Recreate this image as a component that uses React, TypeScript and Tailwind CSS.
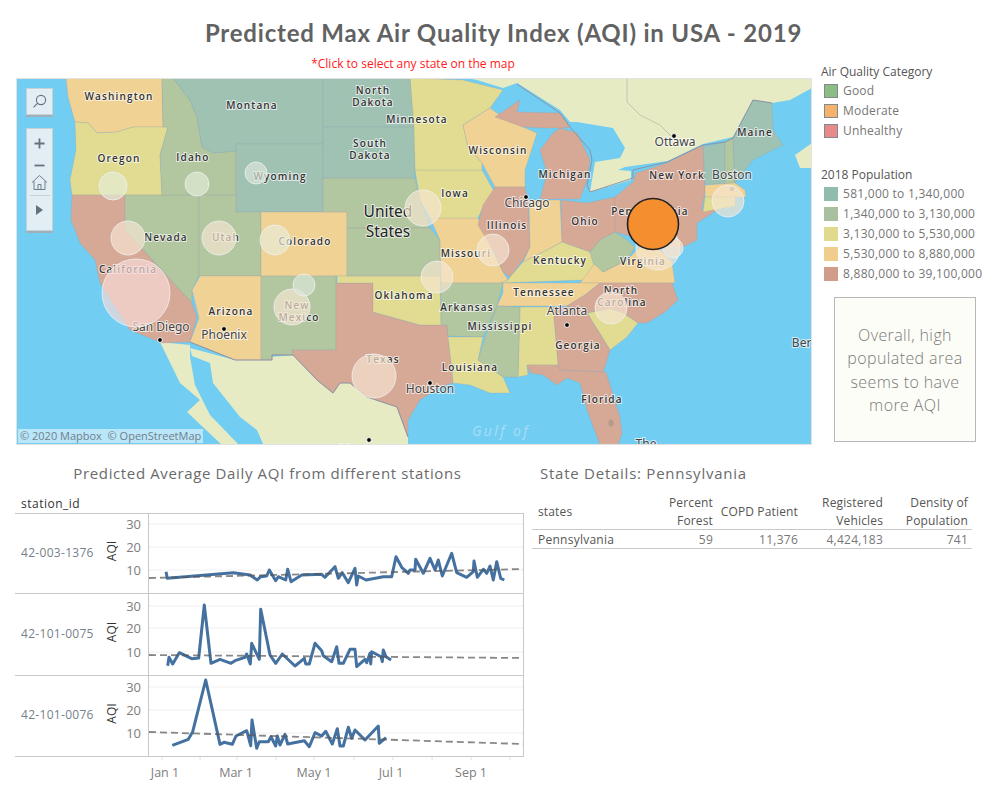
const LAND = '#e6ebc4';
const TEAL = '#9fc2b3';
const GREEN = '#b2c6a0';
const YELLOW = '#e1dc92';
const ORANGE = '#f0d294';
const RED = '#d6a996';

// state shapes, in page coordinates
const states: [string, string][] = [
  [ORANGE, '66,78 162,78 163,127 133,127 117,132 97,133 88,123 75,122 68,97'],
  [YELLOW, '75,122 88,123 97,133 117,132 133,127 168,127 160,155 162,195 72,195 70,180 76,150'],
  [RED, '72,195 125,195 125,230 192,303 197,317 190,342 162,343 130,330 100,283 95,260 80,243 71,220'],
  [GREEN, '125,195 199,195 199,275 192,290 192,303 125,230'],
  [GREEN, '162,78 173,78 190,100 197,117 202,147 213,153 236,151 236,195 162,195 160,155 168,127 163,127'],
  [TEAL, '173,78 323,78 323,144 236,144 236,151 213,153 202,147 197,117 190,100'],
  [TEAL, '236,144 323,144 323,212 236,212'],
  [GREEN, '199,195 236,195 236,212 261,212 261,276 199,276'],
  [ORANGE, '261,212 347,212 347,276 261,276'],
  [ORANGE, '200,276 261,276 261,360 235,360 190,342 199,318 192,290'],
  [GREEN, '261,276 336,276 336,350 292,350 293,355 272,355 272,360 261,360'],
  [RED, '336,283 373,283 373,312 420,325 441,325 447,325 448,336 452,370 453,383 440,387 420,400 408,420 408,437 397,407 367,397 350,383 340,383 333,393 317,380 293,355 292,350 336,350'],
  [YELLOW, '337,276 440,276 441,325 420,325 373,312 373,283 337,283'],
  [GREEN, '323,178 415,178 420,200 430,228 347,228 347,212 323,212'],
  [GREEN, '347,228 430,228 440,240 440,276 347,276'],
  [ORANGE, '430,218 478,218 490,245 503,272 508,280 501,283 441,283 440,240'],
  [YELLOW, '415,170 482,170 495,193 483,207 478,218 430,218 420,200'],
  [YELLOW, '410,78 463,80 503,90 490,108 463,125 468,147 482,163 482,170 415,170'],
  [TEAL, '323,78 410,78 414,127 323,127'],
  [TEAL, '323,127 414,127 415,178 323,178'],
  [ORANGE, '463,125 490,108 500,115 523,127 537,133 525,170 525,187 495,187 482,163 468,147'],
  [RED, '495,117 520,100 517,112 560,113 570,127 563,128 543,128 523,127'],
  [RED, '560,128 577,133 590,160 587,180 580,199 540,199 547,173 540,150 553,133'],
  [RED, '495,187 525,187 528,200 530,247 523,260 510,277 503,272 495,253 478,225 483,205'],
  [ORANGE, '529,200 560,200 562,242 547,250 523,262 530,247'],
  [RED, '561,200 587,203 615,197 615,232 600,240 590,252 562,242'],
  [YELLOW, '523,262 547,250 562,242 590,252 595,263 583,280 500,283 508,280 510,277'],
  [ORANGE, '580,283 595,263 603,272 627,260 640,247 660,250 672,262 675,283'],
  [GREEN, '615,232 627,240 635,247 627,260 603,272 593,263 590,252 600,240'],
  [RED, '615,197 633,182 636,173 667,163 703,145 705,190 702,210 725,205 697,223 697,240 683,247 670,245 640,240 633,237 615,232'],
  [TEAL, '703,147 725,142 725,184 705,184'],
  [GREEN, '725,142 733,138 735,184 725,184'],
  [TEAL, '733,138 753,100 772,103 773,130 783,145 753,160 735,183'],
  [ORANGE, '705,185 735,183 745,190 746,197 705,197'],
  [YELLOW, '705,197 735,197 735,206 703,212'],
  [ORANGE, '503,283 600,283 585,295 567,306 497,306 503,293'],
  [RED, '600,283 672,283 678,300 665,312 647,323 638,323 623,313 610,309 587,313 567,306 585,295'],
  [YELLOW, '587,313 610,309 623,313 638,323 627,337 610,350 602,337'],
  [RED, '553,307 587,307 587,313 602,337 610,350 605,367 603,372 560,370 558,365'],
  [YELLOW, '520,307 553,307 558,365 527,365 528,375 518,377'],
  [RED, '527,365 558,365 560,370 603,372 606,372 620,417 622,433 618,445 600,445 587,410 580,383 567,378 557,385 543,375 530,373'],
  [GREEN, '497,306 520,307 518,377 503,377 478,360 485,337'],
  [GREEN, '441,283 503,283 497,306 483,337 448,336 447,325 441,325'],
  [YELLOW, '448,337 483,337 478,360 503,377 510,393 490,393 470,385 453,383 452,370'],
];

const stateLabels: [string, number, number][] = [
  ['Washington', 119, 96], ['Montana', 252, 105], ['North', 373, 90], ['Dakota', 373, 102],
  ['South', 370, 143], ['Dakota', 370, 155], ['Minnesota', 417, 119], ['Wisconsin', 498, 150],
  ['Michigan', 565, 174], ['New York', 677, 175], ['Maine', 755, 132], ['Oregon', 119, 158],
  ['Idaho', 193, 157], ['Wyoming', 280, 176], ['Iowa', 455, 193], ['Illinois', 507, 225],
  ['Ohio', 585, 221], ['Pennsylvania', 650, 211], ['Nevada', 166, 237], ['Utah', 226, 237],
  ['Colorado', 305, 241], ['Missouri', 466, 253], ['Kentucky', 560, 260], ['Virginia', 643, 261],
  ['California', 128, 269], ['Arizona', 231, 311], ['New', 297, 305], ['Mexico', 299, 317],
  ['Oklahoma', 404, 295], ['Arkansas', 467, 307], ['Tennessee', 544, 292], ['North', 621, 290],
  ['Carolina', 622, 302], ['Mississippi', 500, 326], ['Georgia', 578, 345], ['Louisiana', 470, 367],
  ['Florida', 602, 399], ['Texas', 383, 359],
];

const cityLabels: [string, number, number][] = [
  ['Ottawa', 675, 142], ['Boston', 732, 175], ['Chicago', 527, 203], ['San Diego', 161, 327],
  ['Phoenix', 224, 335], ['Atlanta', 567, 311], ['Houston', 430, 389], ['Monterrey', 369, 449],
  ['Bermuda', 818, 343], ['The', 646, 444],
];

const cityDots: [number, number][] = [
  [674, 136], [526, 197], [160, 340], [224, 329], [567, 325], [430, 383], [369, 440],
];

const bubbles: [number, number, number, string][] = [
  [113, 186, 14, '#e4ecd8'], [197, 184, 12, '#e4ecd8'], [256, 173, 11, '#dce8da'],
  [128, 238, 17, '#f6e6d2'], [219, 238, 17, '#f6e6d2'], [275, 240, 15, '#e9ecd8'],
  [423, 208, 18, '#f6e6d2'], [136, 293, 34, '#f7dcd8'], [292, 307, 18, '#f6e6d2'],
  [304, 285, 11, '#dce8da'], [374, 376, 22, '#f6e6d2'], [493, 250, 16, '#f6e6d2'],
  [437, 277, 16, '#f6e6d2'], [611, 308, 16, '#f6e6d2'], [728, 201, 16, '#f6e6d2'],
  [658, 248, 22, '#f6e6d2'], [673, 248, 10, '#f6e6d2'],
];

const fromLeftCrop = (p: number[][]) => p.map(([x, y]) => [x / 3, 460 + y / 3]);
const fromRightCrop = (p: number[][]) => p.map(([x, y]) => [260 + x / 3, 490 + y / 3]);
const toPoints = (p: number[][]) => p.map(([x, y]) => `${x.toFixed(1)},${y.toFixed(1)}`).join(' ');

const rows = [
  {
    id: '42-003-1376',
    top: 514,
    h: 79,
    grid: [524, 547, 570],
    trend: [578, 569],
    line: [
      ...fromLeftCrop([[498, 335], [502, 355], [700, 338], [750, 345], [772, 360], [782, 350]]),
      ...fromRightCrop([[20, 258], [28, 240], [47, 272], [55, 260], [77, 270], [83, 238], [93, 275], [125, 255], [185, 253], [195, 262], [225, 230], [235, 265], [247, 248], [265, 278], [285, 235], [290, 285], [295, 258], [318, 270], [370, 260], [395, 260], [408, 200], [425, 232], [445, 250], [450, 240], [465, 240], [467, 208], [490, 250], [510, 205], [525, 240], [535, 210], [547, 258], [575, 190], [590, 248], [620, 262], [640, 245], [642, 213], [652, 262], [670, 238], [680, 250], [690, 228], [700, 270], [710, 215], [722, 265], [733, 270]]),
    ],
  },
  {
    id: '42-101-0075',
    top: 594,
    h: 81,
    grid: [606, 628, 652],
    trend: [655, 658],
    line: [
      ...fromLeftCrop([[503, 617], [507, 592], [518, 612], [538, 578], [575, 596], [596, 594], [613, 435], [633, 610], [660, 598], [693, 610], [705, 602], [735, 592], [740, 582], [751, 612], [755, 550], [778, 598], [782, 448]]),
      ...fromRightCrop([[30, 495], [47, 520], [67, 492], [105, 528], [133, 505], [137, 522], [148, 522], [165, 460], [185, 482], [190, 497], [215, 515], [230, 470], [237, 520], [250, 520], [270, 478], [285, 478], [290, 530], [315, 508], [320, 518], [330, 490], [332, 522], [335, 485], [363, 500], [367, 515], [370, 480], [378, 500], [393, 510]]),
    ],
  },
  {
    id: '42-101-0076',
    top: 676,
    h: 80,
    grid: [687, 710, 733],
    trend: [732, 744],
    line: [
      ...fromLeftCrop([[517, 856], [565, 838], [578, 815], [617, 660], [660, 853], [672, 847], [697, 853], [708, 828], [740, 812], [752, 857], [756, 780], [770, 865], [778, 845]]),
      ...fromRightCrop([[25, 755], [33, 740], [47, 768], [52, 738], [60, 765], [75, 733], [83, 762], [133, 752], [148, 770], [165, 728], [185, 738], [197, 724], [217, 762], [232, 716], [240, 768], [250, 768], [265, 712], [275, 745], [285, 720], [315, 750], [355, 708], [358, 760], [378, 743]]),
    ],
  },
];

const ticksX = [162, 200, 237, 276, 314, 354, 393, 432, 471, 510];
const monthLabels: [string, number][] = [['Jan 1', 165], ['Mar 1', 236], ['May 1', 314], ['Jul 1', 391], ['Sep 1', 471]];

const aqiLegend: [string, string][] = [['Good', '#8cbd85'], ['Moderate', '#f6b26b'], ['Unhealthy', '#e88a8a']];
const popLegend: [string, string][] = [
  ['581,000 to 1,340,000', '#90bcae'],
  ['1,340,000 to 3,130,000', '#a8c09f'],
  ['3,130,000 to 5,530,000', '#e0da8e'],
  ['5,530,000 to 8,880,000', '#f1cd8d'],
  ['8,880,000 to 39,100,000', '#d29c8b'],
];

function MapTools() {
  return (
    <>
      <div className="absolute left-[9px] top-[9px] flex h-[27px] w-[27px] items-center justify-center border border-[#c6d0d6] bg-[#e3eef4] shadow-[0_2px_0_#9fb0ba]">
        <svg width="15" height="15" viewBox="0 0 15 15" fill="none" stroke="#66727a" strokeWidth="1.1">
          <circle cx="9" cy="6" r="4.6" />
          <path d="M5.6 9.2 1.5 13.4" />
        </svg>
      </div>
      <div className="absolute left-[9px] top-[49px] flex h-[103px] w-[27px] flex-col items-center border border-[#c6d0d6] bg-[#e3eef4] shadow-[0_2px_0_#9fb0ba]">
        <svg className="mt-[8px]" width="13" height="13" viewBox="0 0 13 13" fill="none" stroke="#66727a" strokeWidth="1.8">
          <path d="M6.5 1.5v10M1.5 6.5h10" />
        </svg>
        <svg className="mt-[9px]" width="13" height="13" viewBox="0 0 13 13" fill="none" stroke="#66727a" strokeWidth="1.8">
          <path d="M1.5 6.5h10" />
        </svg>
        <svg className="mt-[2px]" width="17" height="17" viewBox="0 0 17 17" fill="none" stroke="#66727a" strokeWidth="0.9">
          <path d="M1 8.5 8.5 1.5 16 8.5M3 7v8.5h11V7M7 15.5V10.5h3v5" />
        </svg>
        <div className="mt-[4px] h-px w-[20px] bg-[#c6d0d6]" />
        <svg className="mt-[8px]" width="9" height="12" viewBox="0 0 9 12" fill="#66727a">
          <path d="M1 1l7 5-7 5z" />
        </svg>
      </div>
    </>
  );
}

function UsMap() {
  return (
    <div className="relative h-[367px] w-[796px] overflow-hidden border border-[#e2e2e2] bg-[#72cdf2]">
      <svg className="block h-full w-full" viewBox="17 79 794 365">
        {/* canada */}
        <polygon fill={LAND} points="467,78 812,78 812,88 790,100 772,103 753,100 733,137 703,144 668,161 625,167 618,170 631,171 631,180 590,192 595,162 620,158 625,148 613,128 577,122 570,122 560,110 517,83 503,88 477,80" />
        <polygon fill={LAND} points="66,78 87,78 84,86 75,84" />
        <polygon fill={LAND} points="795,155 812,143 812,168 800,168" />
        {/* mexico, baja and mainland */}
        <polygon fill={LAND} points="160,342 190,345 190,357 195,385 210,415 240,446 223,446 187,412 200,400 180,383" />
        <polygon fill={LAND} points="190,348 235,360 293,355 317,380 333,393 340,383 350,383 367,397 397,407 408,437 408,446 264,446 257,430 240,417 213,383 210,363 192,356" />
        <g stroke="#8f98a8" strokeOpacity="0.3" strokeWidth="0.8">
          {states.map(([c, p], i) => (
            <polygon key={i} fill={c} points={p} />
          ))}
        </g>
        <polyline fill="none" stroke="#8a8f9f" strokeWidth="0.9" points="190,342 235,360 261,360 272,360 272,355 293,355 317,380 333,393 340,383 350,383 367,397 397,407 408,437" />
        <polyline fill="none" stroke="#8a8f9f" strokeWidth="0.9" points="517,84 560,113 570,127 590,150 592,160 587,185 590,192 633,178 633,170 667,162 703,145 725,142 733,138 753,100 772,103" />
        <polyline fill="none" stroke="#b9bda8" strokeWidth="0.8" points="627,78 627,102 640,115 660,125 675,140" />
        <circle cx="732" cy="189" r="2.2" fill="#9a9a9a" />
        <ellipse cx="611" cy="423" rx="2.5" ry="3.5" fill="#b69a8c" />

        <g fontFamily="'Open Sans', sans-serif" fontSize="10" fontWeight="600" letterSpacing="1.15" textAnchor="middle" fill="#333" stroke="#fff" strokeOpacity="0.7" strokeWidth="2" paintOrder="stroke">
          {stateLabels.map(([t, x, y], i) => (
            <text key={i} x={x} y={y + 3.5}>{t}</text>
          ))}
        </g>
        <g fontFamily="'Noto Sans', sans-serif" fontSize="12" textAnchor="middle" fill="#444" stroke="#fff" strokeOpacity="0.7" strokeWidth="2" paintOrder="stroke">
          {cityLabels.map(([t, x, y], i) => (
            <text key={i} x={x} y={y + 4}>{t}</text>
          ))}
          <text x="388" y="217" fontSize="15.5" fill="#222">United</text>
          <text x="388" y="237" fontSize="15.5" fill="#222">States</text>
        </g>
        <text x="501" y="436" fontFamily="'Open Sans', sans-serif" fontSize="14" fontStyle="italic" letterSpacing="2.4" textAnchor="middle" fill="#a8dff5">Gulf of</text>
        {cityDots.map(([x, y], i) => (
          <circle key={i} cx={x} cy={y} r="2.4" fill="#000" stroke="#fff" strokeWidth="0.9" />
        ))}

        {bubbles.map(([x, y, r, c], i) => (
          <circle key={i} cx={x} cy={y} r={r} fill={c} fillOpacity="0.68" stroke="#eef1f1" strokeOpacity="0.8" strokeWidth="1" />
        ))}
        <circle cx="653" cy="224" r="25.5" fill="#f48e2e" stroke="#222" strokeWidth="1.6" />
      </svg>
      <MapTools />
      <div className="absolute bottom-[1px] left-[1px] bg-white/50 px-[2px] text-[11px] leading-[14px] text-[#71808a]">
        © 2020 Mapbox&nbsp; © OpenStreetMap
      </div>
    </div>
  );
}

function Legend() {
  return (
    <div className="ml-[9px] w-[174px] pt-[10px] text-[12px] text-[#767676]">
      <div className="leading-[19px] text-[#555]">Air Quality Category</div>
      {aqiLegend.map(([name, color]) => (
        <div key={name} className="flex h-[20px] items-center gap-[5px] pl-[3px] tracking-[0.2px]">
          <span className="h-[14px] w-[14px] border border-[#7f8b90]" style={{ background: color }} />
          <span>{name}</span>
        </div>
      ))}
      <div className="mt-[24px] leading-[19px] text-[#555]">2018 Population</div>
      {popLegend.map(([name, color]) => (
        <div key={name} className="flex h-[20px] items-center gap-[5px] whitespace-nowrap pl-[3px] tracking-[0.27px]">
          <span className="h-[14px] w-[14px] shrink-0" style={{ background: color }} />
          <span>{name}</span>
        </div>
      ))}
      <div className="ml-[13px] mt-[13px] flex h-[145px] w-[142px] items-center justify-center border border-[#b8b8b8] bg-[#fdfdf7] pt-[2px] text-center text-[16px] font-light leading-[23.4px] tracking-[0.4px] text-[#7a7a7a]">
        <div>
          Overall, high
          <br />
          populated area
          <br />
          seems to have
          <br />
          more AQI
        </div>
      </div>
    </div>
  );
}

function StationRow({ row }: { row: (typeof rows)[number] }) {
  return (
    <div className="flex border-b border-[#c8c8c8]">
      <div className="flex w-[90px] items-center pb-[2px] pl-[6px] text-[12px] tracking-[0.3px] text-[#75818b]">{row.id}</div>
      <svg className="block" width="418" height={row.h} viewBox={`105 ${row.top} 418 ${row.h}`}>
        {row.grid.map((y) => (
          <line key={y} x1="149" x2="523" y1={y} y2={y} stroke="#f0f0f0" />
        ))}
        <line x1="148.5" x2="148.5" y1={row.top - 1} y2={row.top + row.h + 1} stroke="#c8c8c8" />
        <g fontFamily="'Open Sans', sans-serif" fontSize="13" fill="#7d7d7d" textAnchor="end">
          {row.grid.map((y, i) => (
            <text key={y} x="141" y={y + 4.5}>{30 - i * 10}</text>
          ))}
        </g>
        <text
          transform={`translate(116 ${row.top + row.h / 2 - 2.5}) rotate(-90)`}
          fontFamily="'Open Sans', sans-serif"
          fontSize="12"
          fill="#333"
          textAnchor="middle"
        >
          AQI
        </text>
        <polyline points={toPoints(row.line)} fill="none" stroke="#44719f" strokeWidth="3" strokeLinejoin="round" />
        <line x1="149" x2="523" y1={row.trend[0]} y2={row.trend[1]} stroke="#555" strokeOpacity="0.7" strokeWidth="1.8" strokeDasharray="7 4" />
      </svg>
    </div>
  );
}

function StationChart() {
  return (
    <div className="w-[524px] pl-[15px]">
      <div className="h-[50px] pr-[4px] pt-[18px] text-center text-[15px] leading-[20px] tracking-[0.63px] text-[#6b6b6b]">
        Predicted Average Daily AQI from different stations
      </div>
      <div className="h-[18px] pl-[6px] text-[12px] leading-[18px] tracking-[0.5px] text-[#333]">station_id</div>
      <div className="w-[509px] border-r border-t border-[#c8c8c8]">
        {rows.map((row) => (
          <StationRow key={row.id} row={row} />
        ))}
      </div>
      <svg className="block" width="508" height="28" viewBox="15 757 508 28">
        {ticksX.map((x) => (
          <line key={x} x1={x} x2={x} y1="757" y2="760" stroke="#e0e0e0" />
        ))}
        <g fontFamily="'Open Sans', sans-serif" fontSize="12.5" fill="#7d7d7d" textAnchor="middle">
          {monthLabels.map(([t, x]) => (
            <text key={t} x={x} y="777">{t}</text>
          ))}
        </g>
      </svg>
    </div>
  );
}

function StateDetails() {
  const cell = 'flex items-center justify-end pr-1 text-right';
  return (
    <div className="ml-[8px] w-[440px]">
      <div className="h-[48px] pl-[8px] pt-[18px] text-[15px] leading-[20px] tracking-[0.75px] text-[#6b6b6b]">
        State Details: Pennsylvania
      </div>
      <div className="grid h-[37px] grid-cols-[100px_85px_85px_85px_85px] border-b border-[#c8c8c8] pt-[1px] text-[12px] leading-[18px] tracking-[0.15px] text-[#555]">
        <div className="flex items-center pl-[6px]">states</div>
        <div className={cell}>Percent<br />Forest</div>
        <div className={cell + ' whitespace-nowrap'}>COPD Patient</div>
        <div className={cell}>Registered<br />Vehicles</div>
        <div className={cell}>Density of<br />Population</div>
      </div>
      <div className="grid h-[19px] grid-cols-[100px_85px_85px_85px_85px] border-b border-[#c8c8c8] pt-[1px] text-[12px] leading-[18px] tracking-[0.25px] text-[#777]">
        <div className="flex items-center whitespace-nowrap pl-[6px] text-[#555]">Pennsylvania</div>
        <div className={cell}>59</div>
        <div className={cell}>11,376</div>
        <div className={cell}>4,424,183</div>
        <div className={cell}>741</div>
      </div>
    </div>
  );
}

export default function App() {
  return (
    <div className="h-[785px] w-[995px] overflow-hidden bg-white font-['Open_Sans',sans-serif]">
      <h1 className="h-[52px] pl-[12px] pt-[18px] text-center font-['Lato',sans-serif] text-[24px] font-bold leading-[30px] tracking-[0.8px] text-[#626262]">
        Predicted Max Air Quality Index (AQI) in USA - 2019
      </h1>
      <div className="flex">
        <div className="w-[812px] pl-[16px]">
          <div className="h-[26px] pr-[2px] pt-[1px] text-center text-[12px] leading-[22px] text-[#ff1a1a]">*Click to select any state on the map</div>
          <UsMap />
        </div>
        <Legend />
      </div>
      <div className="flex">
        <StationChart />
        <StateDetails />
      </div>
    </div>
  );
}
